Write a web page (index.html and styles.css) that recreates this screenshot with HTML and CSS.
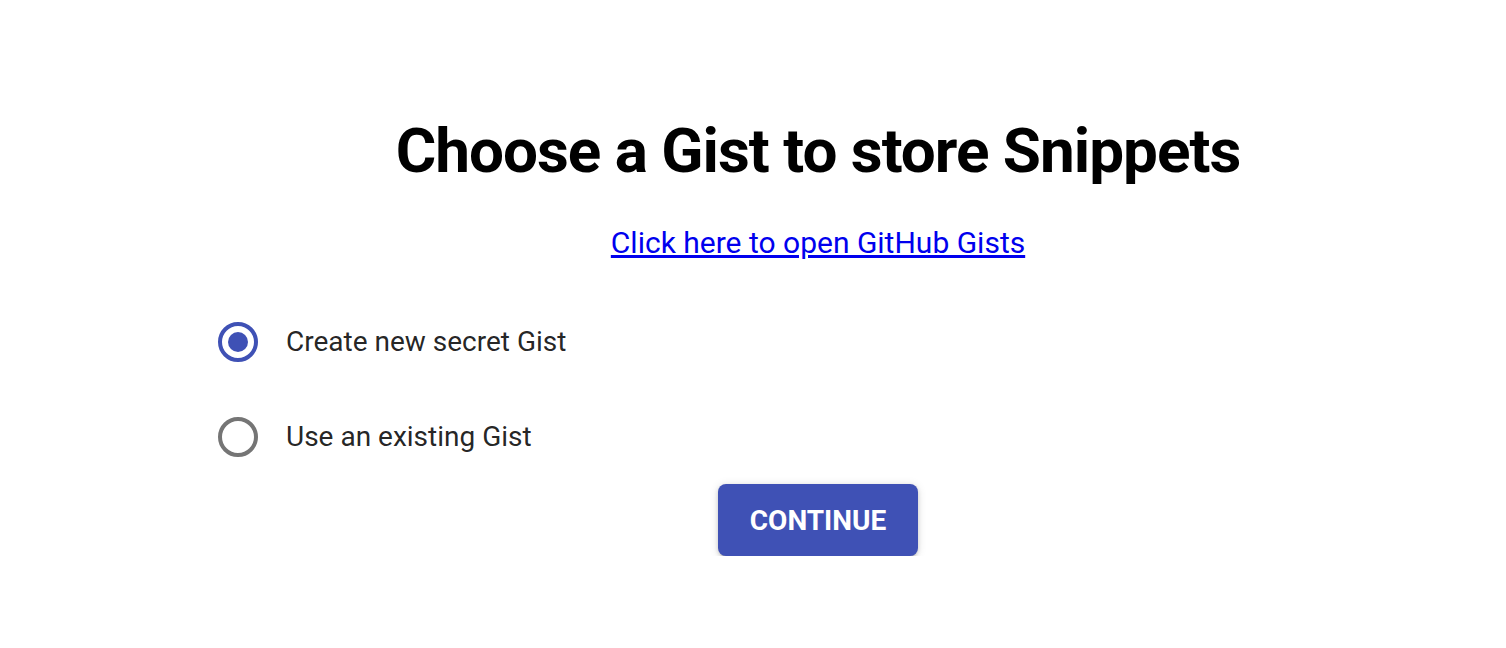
FILE: index.html
```html
<!DOCTYPE html>
<html lang="en">
<head>
  <meta charset="UTF-8" />
  <meta name="viewport" content="width=device-width, initial-scale=1.0"/>
  <title>Choose a Gist</title>
  <link rel="stylesheet" href="styles.css">
</head>
<body>

<div class="page">
  <h1>Choose a Gist to store Snippets</h1>

  <div class="link-row">
    <a href="#">Click here to open GitHub Gists</a>
  </div>

  <div class="options">
    <label class="option">
      <span class="radio checked"></span>
      <span>Create new secret Gist</span>
    </label>
    <label class="option">
      <span class="radio"></span>
      <span>Use an existing Gist</span>
    </label>
  </div>

  <div class="actions">
    <button class="continue">Continue</button>
  </div>
</div>

</body>
</html>
```

FILE: styles.css
```css
body {
  font-family: Roboto, "Liberation Sans", sans-serif;
  margin: 0;
  background: white;
}
.page {
  padding: 113px 0 0 130px;
}
h1 {
  margin: 0;
  text-align: center;
  font-size: 62px;
  font-weight: 700;
  letter-spacing: -1px;
  line-height: 75px;
  color: black;
}
.link-row {
  margin-top: 37px;
  text-align: center;
  font-size: 30px;
  line-height: 35px;
}
.link-row a {
  color: #0000ee;
}
.options {
  margin-top: 34px;
  padding-left: 88px;
}
.option {
  display: flex;
  align-items: center;
  gap: 28px;
  height: 95px;
  font-size: 28px;
  color: rgba(0,0,0,0.87);
}
.radio {
  box-sizing: border-box;
  width: 40px;
  height: 40px;
  border: 4px solid #757575;
  border-radius: 50%;
  display: flex;
  align-items: center;
  justify-content: center;
}
.radio.checked {
  border-color: #3f51b5;
}
.radio.checked::after {
  content: "";
  width: 20px;
  height: 20px;
  border-radius: 50%;
  background: #3f51b5;
}
.actions {
  text-align: center;
}
.continue {
  width: 200px;
  height: 72px;
  background: #3f51b5;
  border: none;
  border-radius: 8px;
  color: white;
  font-family: Roboto, "Liberation Sans", sans-serif;
  font-size: 28px;
  font-weight: 700;
  text-transform: uppercase;
  box-shadow: 0 3px 2px -2px rgba(0,0,0,0.2), 0 2px 4px 0 rgba(0,0,0,0.14), 0 1px 10px 0 rgba(0,0,0,0.12);
  cursor: pointer;
}
```
